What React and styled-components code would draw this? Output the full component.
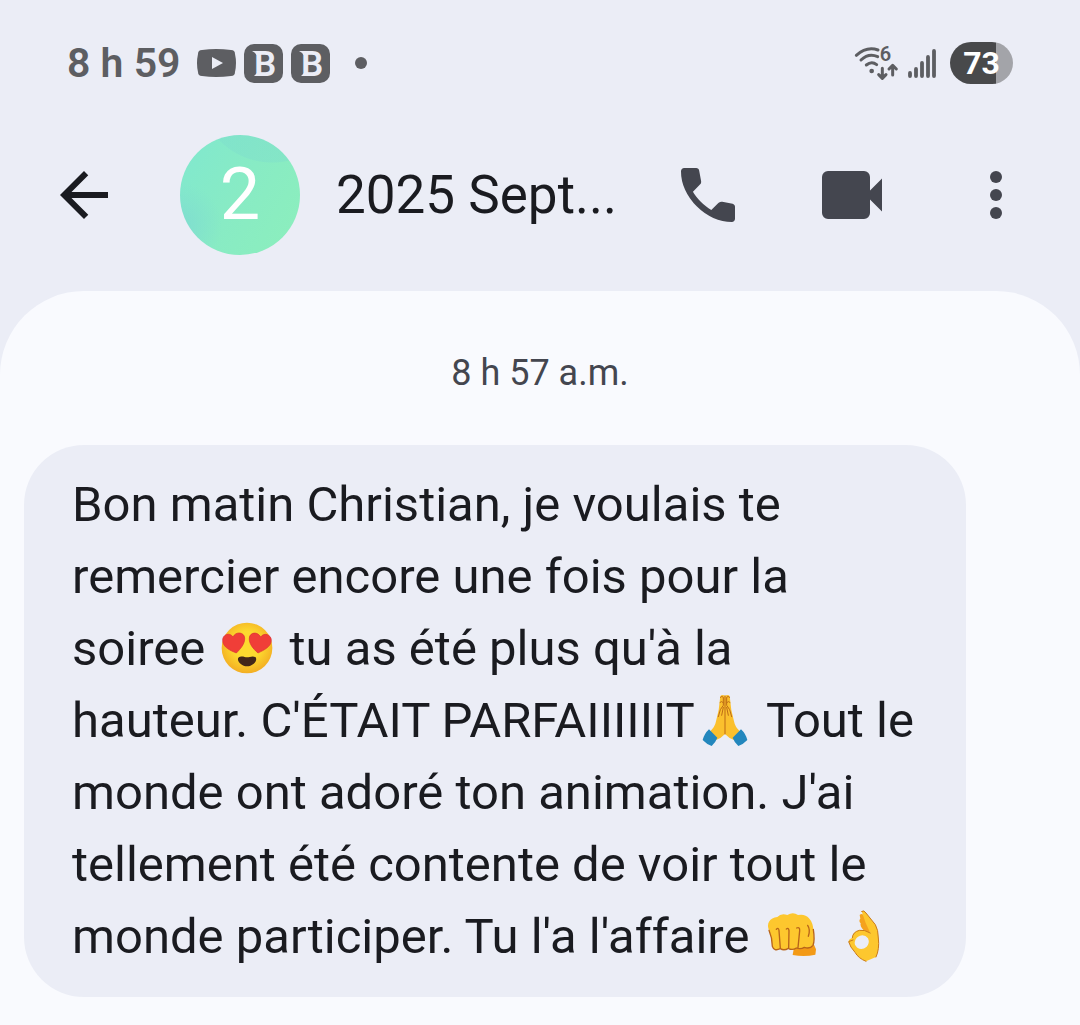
import React from "react";
import styled, { createGlobalStyle } from "styled-components";

const GlobalStyle = createGlobalStyle`
  * {
    box-sizing: border-box;
  }

  body {
    margin: 0;
    background: #ebedf6;
    color: #1a1b20;
    font-family: Roboto, "Liberation Sans", sans-serif;
  }
`;

const Screen = styled.div`
  display: flex;
  flex-direction: column;
  min-height: 100vh;
`;

const StatusBar = styled.div`
  display: flex;
  align-items: center;
  justify-content: space-between;
  height: 126px;
  padding: 0 67px;
  color: #5d5e62;
`;

const StatusGroup = styled.div`
  display: flex;
  align-items: center;
  gap: ${props => props.gap}px;

  svg {
    display: block;
    overflow: visible;
  }
`;

const Clock = styled.time`
  margin-right: 8px;
  font-size: 41px;
  font-weight: 600;
  line-height: 48px;
`;

const Dot = styled.span`
  width: 12px;
  height: 12px;
  margin-left: 17px;
  border-radius: 50%;
  background: #5d5e62;
`;

const Battery = styled.span`
  width: 63px;
  height: 42px;
  margin-left: 4px;
  border-radius: 21px;
  background: linear-gradient(to right, #48494b 73%, #a3a4a9 73%);
  color: #fff;
  font-size: 32px;
  font-weight: bold;
  line-height: 42px;
  text-align: center;
`;

const AppBar = styled.header`
  display: flex;
  align-items: center;
  padding: 9px 48px 36px;
`;

const IconButton = styled.button`
  flex: none;
  width: 72px;
  height: 72px;
  padding: 0;
  border: 0;
  background: none;
  color: ${props => props.color || "#44464f"};
  cursor: pointer;

  svg {
    display: block;
    width: 100%;
    height: 100%;
    fill: currentColor;
  }
`;

const Avatar = styled.div`
  flex: none;
  width: 120px;
  height: 120px;
  margin: 0 36px 0 60px;
  border-radius: 50%;
  background:
    radial-gradient(
      circle at 92px -46px,
      rgba(125, 220, 205, 0.5),
      rgba(125, 220, 205, 0.4) 73px,
      transparent 74px
    ),
    radial-gradient(
      circle at 0 90px,
      rgba(125, 216, 210, 0.7),
      transparent 42px
    ),
    linear-gradient(120deg, #80e8cf, #88ebc4 50%, #8cefbc);
  color: #fff;
  font-size: 72px;
  line-height: 120px;
  text-align: center;
`;

const Title = styled.h1`
  flex: 1;
  min-width: 0;
  margin: 0;
  overflow: hidden;
  font-size: 53px;
  font-weight: 400;
  line-height: 72px;
  white-space: nowrap;
`;

const Actions = styled.div`
  display: flex;
  gap: 72px;
`;

const Sheet = styled.main`
  flex: 1;
  padding: 58px 24px 28px;
  border-radius: 84px 84px 0 0;
  background: #f9fafe;
`;

const Stamp = styled.time`
  display: block;
  margin-bottom: 48px;
  color: #44464f;
  font-size: 36px;
  line-height: 48px;
  text-align: center;
`;

const Bubble = styled.p`
  margin: 0 90px 0 0;
  padding: 24px 48px;
  border-radius: 60px;
  background: #ebedf6;
  font-size: 49px;
  line-height: 72px;
`;

const Line = styled.span`
  display: block;
  white-space: nowrap;
`;

const EmojiSvg = styled.svg`
  width: 60px;
  height: 60px;
  vertical-align: -13px;
`;

const HeartEyes = () => (
  <EmojiSvg viewBox="21 24 180 180" role="img" aria-label="😍">
    <defs>
      <radialGradient id="face" cx="50%" cy="45%" r="55%">
        <stop offset="0.5" stopColor="#fdda2f" />
        <stop offset="1" stopColor="#f3ae23" />
      </radialGradient>
    </defs>
    <circle cx="111" cy="114" r="76" fill="url(#face)" />
    <g fill="#f03e38" stroke="#d92f35" strokeWidth="2">
      <path d="M79 129C62 122 38 112 38 91C37 74 59 65 69 81C77 63 103 66 104 84C105 102 91 117 79 129Z" />
      <path d="M144 129C130 117 116 101 118 84C119 67 143 63 152 81C162 66 184 74 184 91C184 110 161 121 144 129Z" />
    </g>
    <path
      d="M85 143C95 136 104 142 111 142C119 142 128 136 137 142C144 153 127 169 111 169C96 169 79 154 85 143Z"
      fill="#432719"
    />
  </EmojiSvg>
);

const FoldedHands = () => (
  <EmojiSvg viewBox="30 18 180 180" role="img" aria-label="🙏">
    <path
      d="M106 36Q112 30 120 35Q128 30 134 36L139 78L147 112Q150 130 166 143L147 168Q133 164 120 150Q107 164 93 168L74 143Q90 130 93 112L101 78Z"
      fill="#fbc02d"
    />
    <path
      d="M120 36V150M106 40Q111 34 115 40V64L106 77L100 98M134 40Q129 34 125 40V64L134 77L140 98M105 55Q110 49 115 56M135 55Q130 49 125 56M115 70L110 94M125 70L130 94"
      fill="none"
      stroke="#bd6b16"
      strokeWidth="3"
      strokeLinecap="round"
    />
    <path
      d="M72 136L97 161Q92 175 80 186Q64 180 53 168Q58 149 72 136ZM168 136L143 161Q148 175 160 186Q176 180 187 168Q182 149 168 136Z"
      fill="#2387bd"
    />
  </EmojiSvg>
);

const Fist = () => (
  <EmojiSvg viewBox="18 21 180 180" role="img" aria-label="👊">
    <path d="M114 146L173 135L180 151L178 167Q146 174 110 168Z" fill="#f39a16" />
    <path
      d="M39 68Q47 56 64 54Q75 42 94 48Q111 38 126 48Q148 44 159 58Q172 72 172 96Q177 124 171 139Q162 151 145 145Q134 152 121 147Q109 155 97 148Q84 156 73 149Q54 158 49 142Q49 117 39 94Q33 78 39 68Z"
      fill="#fdc72e"
    />
    <path
      d="M61 91Q68 84 69 95L73 148M91 90Q98 85 99 95L98 147M122 87Q132 83 131 95L126 146M155 79Q164 92 157 112M172 91Q177 124 171 139Q162 151 145 145Q134 152 121 147Q109 155 97 148Q84 156 73 149Q54 158 49 142Q49 117 39 94"
      fill="none"
      stroke="#b8641a"
      strokeWidth="4"
      strokeLinecap="round"
      strokeLinejoin="round"
    />
  </EmojiSvg>
);

const OkHand = () => (
  <EmojiSvg viewBox="207 21 180 180" role="img" aria-label="👌">
    <path
      d="M284 48Q290 41 296 49L320 83L312 105L296 94Q284 82 287 73Q280 65 286 59Z"
      fill="#f5a21d"
    />
    <path
      fillRule="evenodd"
      d="M290 37Q297 32 303 42L331 77Q340 93 340 117Q344 151 333 174L303 187Q280 178 270 160Q255 144 251 128Q250 121 262 116Q263 99 283 94Q298 91 316 102L302 72ZM270 126Q266 137 277 146Q291 155 305 143Q315 132 309 118Q300 106 285 110Q272 115 270 126Z"
      fill="#fdc72e"
    />
    <path
      d="M290 37Q297 32 303 42L331 77Q340 93 340 117Q344 151 333 174M303 187Q280 178 270 160Q255 144 251 128L264 123M316 102Q298 91 283 94Q263 99 262 116"
      fill="none"
      stroke="#c97a1a"
      strokeWidth="3"
      strokeLinecap="round"
      strokeLinejoin="round"
    />
  </EmojiSvg>
);

const Video = () => (
  <svg width="39" height="28" viewBox="0 0 39 28">
    <path
      d="M5 1Q19 -1 34 1Q38 1 38 5Q40 14 38 23Q38 27 34 27Q19 29 5 27Q1 27 1 23Q-1 14 1 5Q1 1 5 1Z"
      fill="currentColor"
    />
    <path d="M15 8L26 14L15 20Z" fill="#ebedf6" />
  </svg>
);

const Badge = () => (
  <svg width="39" height="39" viewBox="0 0 39 39">
    <rect width="39" height="39" rx="10" fill="currentColor" />
    <g fill="#ebedf6">
      <path d="M8 7H16V11H12.500Q12 9 8 7ZM10 32L13 29H16V32Z" />
      <text x="10" y="32" fontSize="35" fontWeight="600">
        B
      </text>
    </g>
  </svg>
);

const Wifi = () => (
  <svg width="44" height="34" viewBox="44 50 132 102">
    <g fill="none" stroke="currentColor" strokeLinecap="round" strokeWidth="9">
      <path d="M51 78Q82 50 116 62M65 92Q88 70 115 82M81 107Q97 94 112 106" />
      <path
        d="M129 117V145M118 136L129 147L140 136M160 137V109M149 119L160 108L171 119"
        strokeLinejoin="round"
      />
    </g>
    <circle cx="97" cy="125" r="7" fill="currentColor" />
    <text x="121" y="96" fill="currentColor" fontSize="60" fontWeight="600">
      6
    </text>
  </svg>
);

const Signal = () => (
  <svg width="28" height="30" viewBox="0 0 28 30">
    <path
      d="M2 25V28M8 21V28M14 15V28M20 9V28M26 3V28"
      fill="none"
      stroke="currentColor"
      strokeLinecap="round"
      strokeWidth="3.8"
    />
  </svg>
);

export default function App() {
  return (
    <Screen>
      <GlobalStyle />
      <StatusBar>
        <StatusGroup gap={8}>
          <Clock>8 h 59</Clock>
          <Video />
          <Badge />
          <Badge />
          <Dot />
        </StatusGroup>
        <StatusGroup gap={10}>
          <Wifi />
          <Signal />
          <Battery>73</Battery>
        </StatusGroup>
      </StatusBar>
      <AppBar>
        <IconButton aria-label="Retour" color="#1a1b20">
          <svg viewBox="0 0 24 24">
            <path d="M7.83 13L13.42 18.6L12 20L4 12L12 4L13.42 5.4L7.83 11H20V13Z" />
          </svg>
        </IconButton>
        <Avatar>2</Avatar>
        <Title>2025 Sept...</Title>
        <Actions>
          <IconButton aria-label="Appeler">
            <svg viewBox="0 0 24 24">
              <path d="M19.95 21q-3.13 0-6.18-1.36t-5.54-3.87-3.87-5.54T3 4.05q0-.45.3-.75T4.05 3H8.1q.35 0 .63.24t.32.56l.65 3.5q.05.4-.03.68t-.27.47L6.98 10.9q.5.93 1.19 1.79t1.51 1.66q.78.78 1.63 1.44t1.79 1.21l2.35-2.35q.23-.23.59-.34t.71-.06l3.45.7q.35.1.58.36T21 15.9v4.05q0 .45-.3.75t-.75.3z" />
            </svg>
          </IconButton>
          <IconButton aria-label="Appel vidéo">
            <svg viewBox="0 0 24 24">
              <path d="M4 20q-.83 0-1.41-.59T2 18V6q0-.83.59-1.41T4 4h12q.83 0 1.41.59T18 6v4.5l4-4v11l-4-4V18q0 .83-.59 1.41T16 20z" />
            </svg>
          </IconButton>
          <IconButton aria-label="Plus d'options">
            <svg viewBox="0 0 24 24">
              <circle cx="12" cy="6" r="2" />
              <circle cx="12" cy="12" r="2" />
              <circle cx="12" cy="18" r="2" />
            </svg>
          </IconButton>
        </Actions>
      </AppBar>
      <Sheet>
        <Stamp>8 h 57 a.m.</Stamp>
        <Bubble>
          <Line>Bon matin Christian, je voulais te</Line>
          <Line>remercier encore une fois pour la</Line>
          <Line>
            soiree <HeartEyes /> tu as été plus qu'à la
          </Line>
          <Line>
            hauteur. C'ÉTAIT PARFAIIIIIIT
            <FoldedHands /> Tout le
          </Line>
          <Line>monde ont adoré ton animation. J'ai</Line>
          <Line>tellement été contente de voir tout le</Line>
          <Line>
            monde participer. Tu l'a l'affaire <Fist /> <OkHand />
          </Line>
        </Bubble>
      </Sheet>
    </Screen>
  );
}
